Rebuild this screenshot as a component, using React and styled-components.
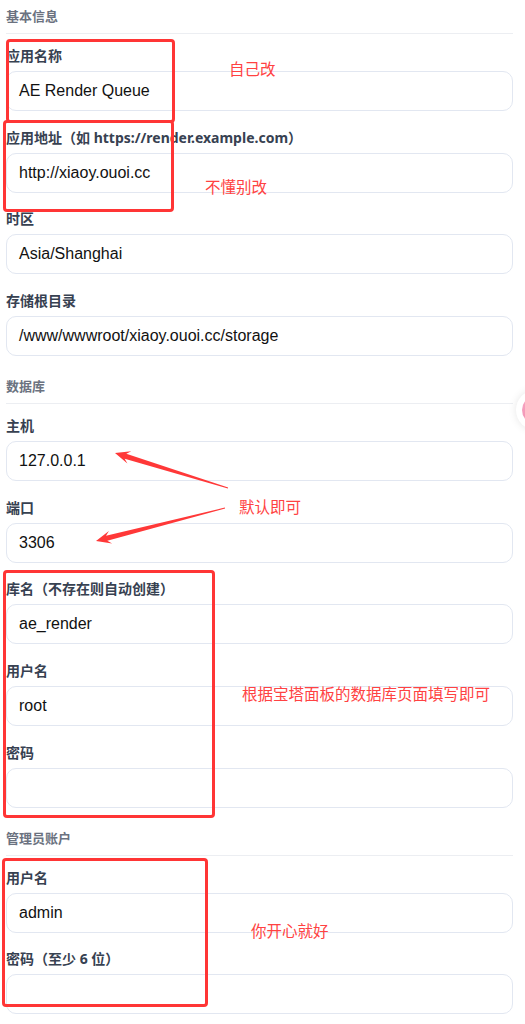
import React from "react";
import styled, { createGlobalStyle } from "styled-components";

const Global = createGlobalStyle`
  html, body { margin: 0; padding: 0; background: #fff; overflow-x: hidden; }
  body { font-family: "Noto Sans", "Noto Sans CJK SC", sans-serif; }
  * { box-sizing: border-box; }
`;

const Page = styled.div`
  position: relative;
  width: 525px;
  min-height: 1024px;
  padding: 7px 12px 0 6px;
  overflow: hidden;
`;

const Section = styled.section`
  margin-top: ${(p) => (p.$first ? "0" : "4.2px")};
`;

const SectionTitle = styled.h3`
  margin: 0;
  font-family: "Noto Sans", "Noto Sans CJK SC", sans-serif;
  font-size: 13px;
  font-weight: 600;
  line-height: 18px;
  color: #6b7280;
  padding-bottom: 8px;
  border-bottom: 1px solid #eceef2;
`;

const Fields = styled.div`
  display: flex;
  flex-direction: column;
  padding-top: 12px;
`;

const Field = styled.div`
  display: flex;
  flex-direction: column;
  gap: 5px;
  margin-bottom: 16.7px;
`;

const Label = styled.label`
  font-family: "Noto Sans", "Noto Sans CJK SC", sans-serif;
  font-size: 14px;
  font-weight: 700;
  line-height: 20px;
  color: #374151;
  white-space: nowrap;
`;

const Input = styled.div`
  height: 40px;
  border: 1px solid #e2e7f1;
  border-radius: 10px;
  background: #fff;
  padding: 0 12px;
  display: flex;
  align-items: center;
  font-family: "Liberation Sans", Arial, sans-serif;
  font-size: 16px;
  color: #111;
`;

const Overlay = styled.div`
  position: absolute;
  inset: 0;
  pointer-events: none;
`;

const RedBox = styled.div`
  position: absolute;
  left: ${(p) => p.$x}px;
  top: ${(p) => p.$y}px;
  width: ${(p) => p.$w}px;
  height: ${(p) => p.$h}px;
  border: 3.5px solid #ff3535;
  border-radius: 4px;
`;

const Note = styled.span`
  position: absolute;
  left: ${(p) => p.$x}px;
  top: ${(p) => p.$y}px;
  font-family: "Noto Sans CJK SC", sans-serif;
  font-size: 15.5px;
  line-height: 20px;
  color: #ff4242;
  white-space: nowrap;
`;

const ArrowLayer = styled.svg`
  position: absolute;
  left: 0;
  top: 0;
`;

const FloatButton = styled.div`
  position: absolute;
  left: 516px;
  top: 390px;
  width: 40px;
  height: 40px;
  border-radius: 50%;
  background: #fff;
  box-shadow: 0 0 8px rgba(0, 0, 0, 0.1);
  display: flex;
  align-items: center;
  justify-content: center;
`;

const FloatDot = styled.div`
  width: 28px;
  height: 28px;
  border-radius: 50%;
  background: linear-gradient(135deg, #f7a8c4, #ee7fa6);
`;

function arrowPoints(tail, tip) {
  const dx = tip[0] - tail[0];
  const dy = tip[1] - tail[1];
  const len = Math.hypot(dx, dy);
  const u = [dx / len, dy / len];
  const n = [-u[1], u[0]];
  const headLen = 15;
  const headW = 6.5;
  const neckBack = 11;
  const neckW = 2.6;
  const tailW = 0.4;
  const base = [tip[0] - u[0] * headLen, tip[1] - u[1] * headLen];
  const neck = [tip[0] - u[0] * neckBack, tip[1] - u[1] * neckBack];
  const pts = [
    tip,
    [base[0] + n[0] * headW, base[1] + n[1] * headW],
    [neck[0] + n[0] * neckW, neck[1] + n[1] * neckW],
    [tail[0] + n[0] * tailW, tail[1] + n[1] * tailW],
    [tail[0] - n[0] * tailW, tail[1] - n[1] * tailW],
    [neck[0] - n[0] * neckW, neck[1] - n[1] * neckW],
    [base[0] - n[0] * headW, base[1] - n[1] * headW],
  ];
  return pts.map((p) => `${p[0].toFixed(1)},${p[1].toFixed(1)}`).join(" ");
}

const sections = [
  {
    title: "基本信息",
    fields: [
      ["应用名称", "AE Render Queue"],
      ["应用地址（如 https://render.example.com）", "http://xiaoy.ouoi.cc"],
      ["时区", "Asia/Shanghai"],
      ["存储根目录", "/www/wwwroot/xiaoy.ouoi.cc/storage"],
    ],
  },
  {
    title: "数据库",
    fields: [
      ["主机", "127.0.0.1"],
      ["端口", "3306"],
      ["库名（不存在则自动创建）", "ae_render"],
      ["用户名", "root"],
      ["密码", ""],
    ],
  },
  {
    title: "管理员账户",
    fields: [
      ["用户名", "admin"],
      ["密码（至少 6 位）", ""],
    ],
  },
];

const boxes = [
  { x: 6, y: 39, w: 169, h: 84 },
  { x: 3, y: 120, w: 171, h: 92 },
  { x: 3, y: 570, w: 212, h: 248 },
  { x: 2, y: 858, w: 206, h: 149 },
];

const notes = [
  { x: 229, y: 58, text: "自己改" },
  { x: 205, y: 176, text: "不懂别改" },
  { x: 239, y: 496, text: "默认即可" },
  { x: 242, y: 683, text: "根据宝塔面板的数据库页面填写即可" },
  { x: 251, y: 920, text: "你开心就好" },
];

export default function App() {
  return (
    <>
      <Global />
      <Page>
        {sections.map((s, i) => (
          <Section key={s.title} $first={i === 0}>
            <SectionTitle>{s.title}</SectionTitle>
            <Fields>
              {s.fields.map(([label, value], j) => (
                <Field key={j}>
                  <Label>{label}</Label>
                  <Input>{value}</Input>
                </Field>
              ))}
            </Fields>
          </Section>
        ))}
        <FloatButton>
          <FloatDot />
        </FloatButton>
        <Overlay>
          {boxes.map((b, i) => (
            <RedBox key={i} $x={b.x} $y={b.y} $w={b.w} $h={b.h} />
          ))}
          {notes.map((n, i) => (
            <Note key={i} $x={n.x} $y={n.y}>
              {n.text}
            </Note>
          ))}
          <ArrowLayer width="525" height="1024" viewBox="0 0 525 1024">
            <polygon points={arrowPoints([228, 488], [115, 453])} fill="#ff3838" />
            <polygon points={arrowPoints([225, 508], [96, 541])} fill="#ff3838" />
          </ArrowLayer>
        </Overlay>
      </Page>
    </>
  );
}
